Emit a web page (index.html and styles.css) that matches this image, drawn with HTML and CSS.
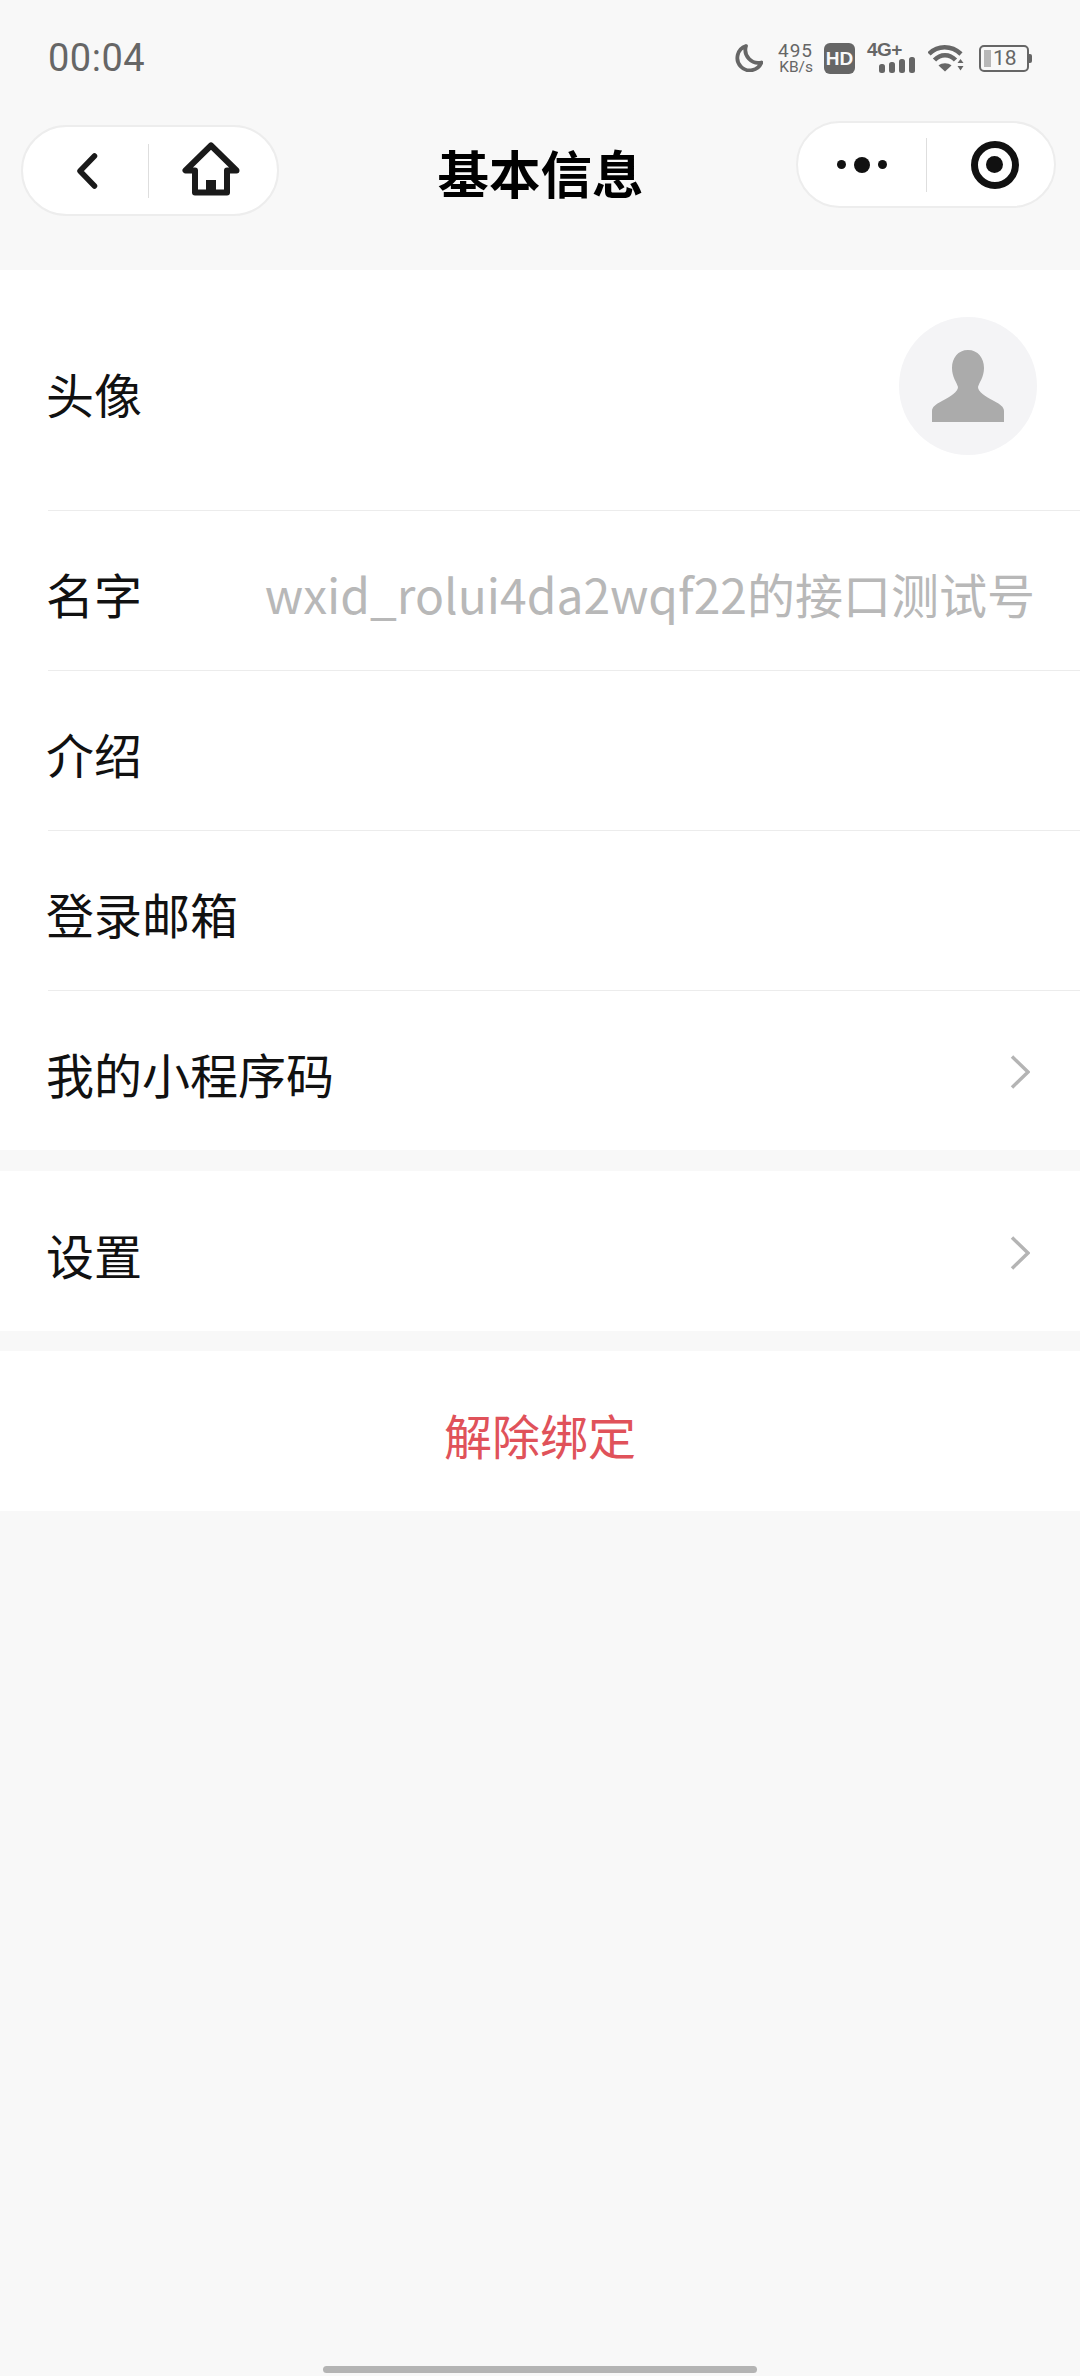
FILE: index.html
```html
<!DOCTYPE html>
<html lang="zh-CN">
<head>
    <meta charset="UTF-8">
    <meta name="viewport" content="width=device-width, initial-scale=1.0">
    <title>基本信息</title>
    <link rel="stylesheet" href="styles.css">
</head>
<body>
    <div class="page">
        <!-- Status bar -->
        <div class="status-bar">
            <span class="clock">00:04</span>
            <div class="status-icons">
                <svg class="moon" viewBox="0 0 28 28"><path d="M11 2A12.500 12.500 0 1 0 26.500 18.500 13 13 0 0 1 11 2Z" fill="none" stroke="#666" stroke-width="3.800" stroke-linejoin="round"/></svg>
                <div class="speed"><span class="speed-num">495</span><span class="speed-unit">KB/s</span></div>
                <span class="hd">HD</span>
                <div class="signal">
                    <span class="signal-label">4G+</span>
                    <svg class="signal-bars" viewBox="0 0 36 16"><rect x="0" y="7" width="6" height="9" rx="2.500"/><rect x="10" y="5" width="6" height="11" rx="2.500"/><rect x="20" y="2" width="6" height="14" rx="2.500"/><rect x="30" y="0" width="6" height="16" rx="2.500"/></svg>
                </div>
                <svg class="wifi" viewBox="0 0 36 28"><path d="M1 10C9.500 1 23.500 1 33 10" fill="none" stroke="#666" stroke-width="4.500"/><path d="M6.500 16C12.500 9.500 21.500 9.500 27.500 16" fill="none" stroke="#666" stroke-width="4.500"/><path d="M10.500 21.500C14 18.500 20 18.500 23.500 21.500L17 27.500Z" fill="#666"/><path d="M29.500 19L32.500 15 35.500 19ZM29.500 22L35.500 22 32.500 26.500Z" fill="#666"/></svg>
                <div class="battery">
                    <div class="battery-body"><span class="battery-level"></span><span class="battery-num">18</span></div>
                    <span class="battery-nub"></span>
                </div>
            </div>
        </div>

        <!-- Mini program nav -->
        <div class="nav">
            <div class="capsule capsule-left">
                <div class="capsule-cell">
                    <svg class="back-icon" viewBox="0 0 22 36"><path d="M18.500 3L4 18 18.500 33" fill="none" stroke="#1a1a1a" stroke-width="5.500" stroke-linecap="round" stroke-linejoin="round"/></svg>
                </div>
                <div class="capsule-cell">
                    <svg class="home-icon" viewBox="0 0 58 54"><path d="M29 3.500L3.500 28.500H13V50.500H45V28.500H54.500Z" fill="none" stroke="#1a1a1a" stroke-width="6" stroke-linejoin="round"/><rect x="24" y="38" width="10" height="13" fill="#1a1a1a"/></svg>
                </div>
            </div>
            <h1 class="title">基本信息</h1>
            <div class="capsule capsule-right">
                <div class="capsule-cell">
                    <div class="dots"><span class="dot"></span><span class="dot dot-big"></span><span class="dot"></span></div>
                </div>
                <div class="capsule-cell">
                    <span class="target"><span class="target-dot"></span></span>
                </div>
            </div>
        </div>

        <!-- Profile rows -->
        <div class="group group-info">
            <div class="row row-avatar">
                <span class="row-label">头像</span>
                <div class="avatar">
                    <svg class="avatar-icon" viewBox="0 0 72 72"><path d="M36 0C46 0 52 8 52 18C52 27 47 33 46 37C46 42 53 46 62 51C68 54 72 57 72 61V72H0V61C0 57 4 54 10 51C19 46 26 42 26 37C25 33 20 27 20 18C20 8 26 0 36 0Z" fill="#ababab"/></svg>
                </div>
            </div>
            <div class="row">
                <span class="row-label">名字</span>
                <span class="row-value">wxid_rolui4da2wqf22的接口测试号</span>
            </div>
            <div class="row">
                <span class="row-label">介绍</span>
            </div>
            <div class="row">
                <span class="row-label">登录邮箱</span>
            </div>
            <div class="row">
                <span class="row-label">我的小程序码</span>
                <svg class="chevron" viewBox="0 0 20 34"><path d="M2 1.500L18 17 2 32.500" fill="none" stroke="#b4b4b4" stroke-width="3.500"/></svg>
            </div>
        </div>

        <div class="group group-settings">
            <div class="row">
                <span class="row-label">设置</span>
                <svg class="chevron" viewBox="0 0 20 34"><path d="M2 1.500L18 17 2 32.500" fill="none" stroke="#b4b4b4" stroke-width="3.500"/></svg>
            </div>
        </div>

        <div class="group group-unbind">
            <div class="row row-center">
                <span class="row-danger">解除绑定</span>
            </div>
        </div>

        <div class="home-bar"></div>
    </div>
</body>
</html>
```

FILE: styles.css
```css
* {
    box-sizing: border-box;
}

body {
    margin: 0;
    background-color: #f8f8f8;
    font-family: "Noto Sans CJK SC", "Noto Sans", sans-serif;
    color: #111;
}

.page {
    display: flex;
    flex-direction: column;
    width: 1080px;
    height: 2376px;
    overflow: hidden;
}

/* Status bar */
.status-bar {
    display: flex;
    justify-content: space-between;
    align-items: center;
    height: 116px;
    padding: 0 48px 0 48px;
}

.clock {
    font-family: Roboto, sans-serif;
    font-size: 38px;
    color: #666;
    letter-spacing: 0.500px;
}

.status-icons {
    display: flex;
    align-items: center;
    height: 32px;
}

.moon {
    width: 28px;
    height: 28px;
    margin-right: 14px;
}

.speed {
    display: flex;
    flex-direction: column;
    align-items: flex-end;
    gap: 1px;
    width: 36px;
    margin-right: 11px;
    font-family: Roboto, sans-serif;
    color: #666;
}

.speed-num {
    font-size: 19px;
    line-height: 16px;
    letter-spacing: 1px;
}

.speed-unit {
    font-size: 15.500px;
    line-height: 14px;
}

.hd {
    width: 31px;
    height: 31px;
    margin-right: 12px;
    border-radius: 6px;
    background-color: #666;
    color: #f8f8f8;
    font-family: "Liberation Sans", sans-serif;
    font-size: 19px;
    font-weight: 700;
    line-height: 31px;
    text-align: center;
}

.signal {
    display: flex;
    flex-direction: column;
    width: 48px;
    height: 32px;
    margin-right: 13px;
}

.signal-label {
    font-family: "Liberation Sans", sans-serif;
    font-size: 19px;
    font-weight: 700;
    line-height: 15px;
    letter-spacing: -0.500px;
    color: #666;
}

.signal-bars {
    width: 36px;
    height: 16px;
    margin-left: 12px;
    fill: #666;
}

.wifi {
    width: 36px;
    height: 28px;
    margin-right: 15px;
}

.battery {
    display: flex;
    align-items: center;
}

.battery-body {
    display: flex;
    align-items: center;
    width: 50px;
    height: 27px;
    padding: 3px;
    border: 2px solid #666;
    border-radius: 5px;
}

.battery-level {
    width: 7px;
    height: 100%;
    background-color: #b8b8b8;
}

.battery-num {
    margin-left: 2px;
    font-family: Roboto, sans-serif;
    font-size: 21px;
    line-height: 20px;
    color: #666;
}

.battery-nub {
    width: 3px;
    height: 9px;
    background-color: #666;
    border-radius: 0 2px 2px 0;
}

/* Nav */
.nav {
    display: flex;
    justify-content: space-between;
    align-items: flex-start;
    height: 154px;
    padding: 0 24px 0 21px;
}

.capsule {
    display: flex;
    align-items: center;
    background-color: #fff;
    border: 2px solid #ededed;
    border-radius: 46px;
}

.capsule-left {
    width: 258px;
    height: 91px;
    margin-top: 9px;
}

.capsule-right {
    width: 260px;
    height: 87px;
    margin-top: 5px;
}

.capsule-cell {
    display: flex;
    justify-content: center;
    align-items: center;
    height: 54px;
}

.capsule-cell:first-child {
    border-right: 1px solid #dedede;
}

.capsule-left .capsule-cell:first-child {
    width: 126px;
    padding-left: 6px;
}

.capsule-left .capsule-cell:last-child {
    width: 126px;
    margin-top: -4px;
    padding-right: 3px;
}

.capsule-right .capsule-cell:first-child {
    width: 130px;
}

.capsule-right .capsule-cell:last-child {
    width: 128px;
    padding-left: 9px;
}

.back-icon {
    width: 22px;
    height: 36px;
    margin-right: 4px;
}

.home-icon {
    width: 58px;
    height: 54px;
}

.title {
    margin: 21px 0 0 6px;
    font-size: 51.500px;
    font-weight: 700;
    line-height: 70px;
    color: #000;
}

.dots {
    display: flex;
    align-items: center;
    gap: 8px;
}

.dot {
    width: 9px;
    height: 9px;
    border-radius: 50%;
    background-color: #111;
}

.dot-big {
    width: 16px;
    height: 16px;
}

.target {
    display: flex;
    justify-content: center;
    align-items: center;
    width: 48px;
    height: 48px;
    border: 7px solid #111;
    border-radius: 50%;
}

.target-dot {
    width: 17px;
    height: 17px;
    border-radius: 50%;
    background-color: #111;
}

/* List */
.group {
    background-color: #fff;
}

.group-settings {
    margin-top: 21px;
}

.group-unbind {
    margin-top: 20px;
}

.row {
    display: flex;
    justify-content: space-between;
    align-items: center;
    height: 160px;
    margin-left: 48px;
    padding: 5px 45px 0 0;
    border-top: 1px solid #ececec;
}

.group .row:first-child {
    border-top: none;
}

.row-avatar {
    height: 240px;
    padding-right: 43px;
}

.row-center {
    justify-content: center;
    margin-left: 0;
    padding-right: 0;
}

.row-label {
    margin-left: -2px;
    font-size: 48px;
    line-height: 60px;
    font-weight: 400;
    color: #111;
}

.row-value {
    font-size: 48px;
    line-height: 60px;
    font-weight: 400;
    color: #b8b8b8;
}

.row-danger {
    font-size: 48px;
    line-height: 60px;
    font-weight: 400;
    color: #e0525a;
}

.chevron {
    width: 20px;
    height: 34px;
    margin-top: -2px;
    margin-right: 5px;
}

.avatar {
    display: flex;
    justify-content: center;
    align-items: center;
    width: 138px;
    height: 138px;
    margin-top: -13px;
    border-radius: 50%;
    background-color: #f4f4f6;
}

.avatar-icon {
    width: 72px;
    height: 72px;
}

.home-bar {
    align-self: center;
    width: 434px;
    height: 7px;
    margin-top: auto;
    margin-bottom: 3px;
    border-radius: 4px;
    background-color: #b4b4b4;
}
```
